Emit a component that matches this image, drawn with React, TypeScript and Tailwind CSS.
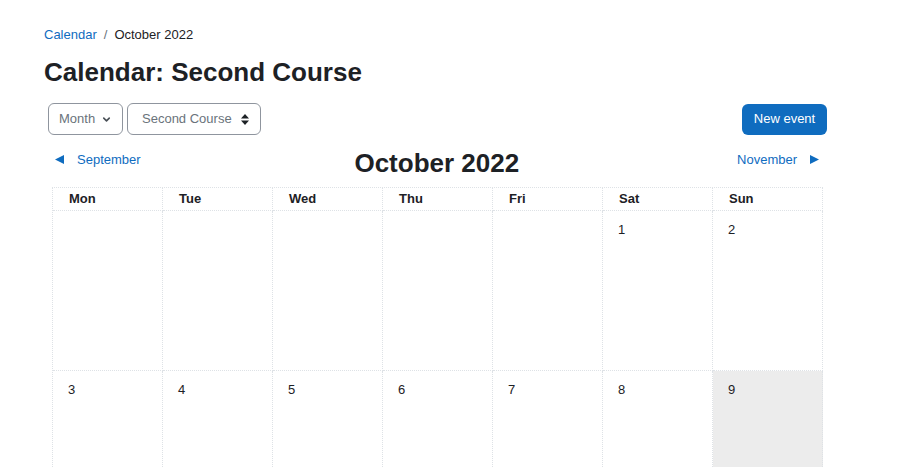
import { ChevronDown } from "lucide-react";

const days = ["Mon", "Tue", "Wed", "Thu", "Fri", "Sat", "Sun"];

const weeks: (number | null)[][] = [
  [null, null, null, null, null, 1, 2],
  [3, 4, 5, 6, 7, 8, 9],
];

function SortIcon() {
  return (
    <svg width="8" height="11" viewBox="0 0 8 11" className="fill-[#1d2125]">
      <path d="M4 0 L8 4.5 H0 Z" />
      <path d="M4 11 L8 6.5 H0 Z" />
    </svg>
  );
}

function Arrow({ dir }: { dir: "left" | "right" }) {
  return (
    <svg width="9" height="9" viewBox="0 0 9 9" className="fill-[#0f6cbf]">
      {dir === "left" ? <path d="M0 4.5 L9 0 V9 Z" /> : <path d="M9 4.5 L0 0 V9 Z" />}
    </svg>
  );
}

export default function App() {
  return (
    <div className="min-h-screen bg-white font-['Liberation_Sans',Arial,sans-serif] text-[#1d2125]">
      <div className="pl-[44px] pr-[79px] pt-[27px]">
        <nav className="flex items-center text-[13px] leading-[16px]">
          <a className="text-[#0f6cbf]">Calendar</a>
          <span className="px-[7px] text-[#6a737b]">/</span>
          <span>October 2022</span>
        </nav>
        <h2 className="mt-[14px] text-[26px] font-bold leading-[30px]">
          Calendar: Second Course
        </h2>

        <div className="mt-[16px] flex items-center justify-between pl-[4px]">
          <div className="flex gap-[4px]">
            <div className="flex h-[32px] w-[75px] items-center gap-[6px] rounded-[6px] border border-[#8f959e] pl-[10px] text-[13px] text-[#6a737b]">
              <span>Month</span>
              <ChevronDown size={11} strokeWidth={3.5} className="text-[#495057]" />
            </div>
            <div className="flex h-[32px] w-[134px] items-center gap-[9px] rounded-[6px] border border-[#8f959e] pl-[14px] text-[13px] text-[#6a737b]">
              <span>Second Course</span>
              <SortIcon />
            </div>
          </div>
          <button className="h-[31px] w-[85px] rounded-[6px] bg-[#0f6cbf] text-[13px] text-white">
            New event
          </button>
        </div>

        <div className="mt-[6px] flex items-center justify-between pl-[11px] pr-[8px]">
          <a className="flex items-center gap-[13px] text-[13px] leading-[16px] text-[#0f6cbf]">
            <Arrow dir="left" />
            September
          </a>
          <h2 className="mt-[7px] pr-[4px] text-[26px] font-bold leading-[30px]">October 2022</h2>
          <a className="flex items-center gap-[13px] text-[13px] leading-[16px] text-[#0f6cbf]">
            November
            <Arrow dir="right" />
          </a>
        </div>

        <div className="ml-[8px] mt-[9px] w-[771px]">
          <div className="grid grid-cols-7 border-t border-l border-dotted border-[#dee2e6]">
            {days.map((d) => (
              <div
                key={d}
                className="h-[23px] border-r border-b border-dotted border-[#dee2e6] pl-[16px] pt-[1px] text-[13px] font-bold"
              >
                {d}
              </div>
            ))}
            {weeks.flat().map((n, i) => (
              <div
                key={i}
                className={`h-[160px] border-r border-b border-dotted border-[#dee2e6] pl-[15px] pt-[9px] text-[13px] ${
                  n === 9 ? "bg-[#ececec]" : ""
                }`}
              >
                {n}
              </div>
            ))}
          </div>
        </div>
      </div>
    </div>
  );
}
